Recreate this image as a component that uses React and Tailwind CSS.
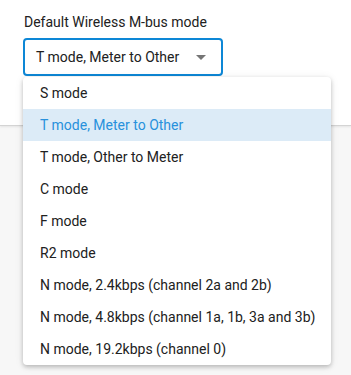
import { useState } from 'react'

const modes = [
  'S mode',
  'T mode, Meter to Other',
  'T mode, Other to Meter',
  'C mode',
  'F mode',
  'R2 mode',
  'N mode, 2.4kbps (channel 2a and 2b)',
  'N mode, 4.8kbps (channel 1a, 1b, 3a and 3b)',
  'N mode, 19.2kbps (channel 0)',
]

export default function App() {
  const [selected, setSelected] = useState(1)

  return (
    <div className="relative min-h-[375px] w-[351px] bg-[#f7f7f7] font-['Roboto',sans-serif]">
      <div className="h-[126px] border-b border-[#d4d4d4] bg-white px-6 pt-[13px] shadow-[0_1px_2px_rgba(0,0,0,0.08)]">
        <div className="text-[14px] leading-[18px] text-[#212121]">Default Wireless M-bus mode</div>
        <div className="mt-[7px] flex h-[38px] w-[200px] -translate-x-px items-center justify-between rounded-[4px] border-2 border-[#0d87d6] pl-[11px] pr-[15px]">
          <span className="text-[14px] text-[#212121]">{modes[selected]}</span>
          <svg width="10" height="5" viewBox="0 0 10 5" className="mt-[1px]">
            <path d="M0 0 L10 0 L5 5 Z" fill="#757575" />
          </svg>
        </div>
      </div>

      <div className="absolute left-[23px] top-[77px] w-[308px] overflow-hidden rounded-[4px] bg-white shadow-[0_2px_4px_rgba(0,0,0,0.22),0_1px_10px_rgba(0,0,0,0.08)]">
        {modes.map((m, i) => (
          <div
            key={m}
            onClick={() => setSelected(i)}
            className={
              i === selected
                ? 'flex h-8 items-center bg-[#dcebf7] pl-[17px] text-[14px] text-[#2891dc]'
                : 'flex h-8 items-center pl-[17px] text-[14px] text-[#212121]'
            }
          >
            {m}
          </div>
        ))}
      </div>
    </div>
  )
}
